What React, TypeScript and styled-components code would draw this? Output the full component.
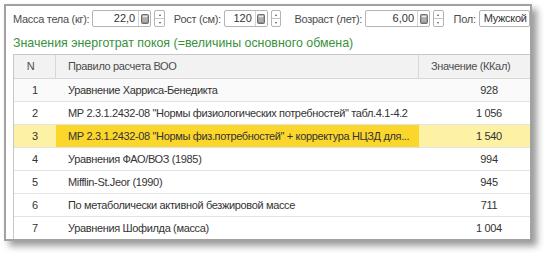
import React from 'react';
import styled, { createGlobalStyle } from 'styled-components';

const GlobalStyle = createGlobalStyle`
  html, body {
    margin: 0;
    padding: 0;
    background: #fff;
  }
  body {
    font-family: "Liberation Sans", Arial, sans-serif;
  }
`;

interface Row {
  n: number;
  rule: string;
  value: string;
  current?: boolean;
}

const rows: Row[] = [
  { n: 1, rule: 'Уравнение Харриса-Бенедикта', value: '928' },
  { n: 2, rule: 'МР 2.3.1.2432-08 "Нормы физиологических потребностей" табл.4.1-4.2', value: '1 056' },
  { n: 3, rule: 'МР 2.3.1.2432-08 "Нормы физ.потребностей" + корректура НЦЗД для...', value: '1 540', current: true },
  { n: 4, rule: 'Уравнения ФАО/ВОЗ (1985)', value: '994' },
  { n: 5, rule: 'Mifflin-St.Jeor (1990)', value: '945' },
  { n: 6, rule: 'По метаболически активной безжировой массе', value: '711' },
  { n: 7, rule: 'Уравнения Шофилда (масса)', value: '1 004' },
];

const CalcIcon = () => (
  <svg width="8" height="10" viewBox="0 0 8 10">
    <rect x="0.5" y="0.5" width="7" height="9" rx="1" fill="#8c8c8c" stroke="#6e6e6e" />
    <rect x="1.5" y="1.5" width="5" height="2" fill="#e8e8e8" />
    <rect x="1.5" y="4.5" width="5" height="1" fill="#d0d0d0" />
    <rect x="1.5" y="6.5" width="5" height="1" fill="#d0d0d0" />
  </svg>
);

const NumberField: React.FC<{ value: string; width: number }> = ({ value, width }) => (
  <>
    <InputBox>
      <InputText $width={width}>{value}</InputText>
      <CalcButton>
        <CalcIcon />
      </CalcButton>
    </InputBox>
    <Spinner>
      <SpinHalf>
        <Arrow $up />
      </SpinHalf>
      <SpinHalf>
        <Arrow />
      </SpinHalf>
    </Spinner>
  </>
);

const App: React.FC = () => {
  return (
    <>
      <GlobalStyle />
      <Page>
        <Frame>
          <FieldsRow>
            <Label>Масса тела (кг):</Label>
            <NumberField value="22,0" width={46} />
            <Label $gap={9}>Рост (см):</Label>
            <NumberField value="120" width={31} />
            <Label $gap={13}>Возраст (лет):</Label>
            <NumberField value="6,00" width={52} />
            <Label $gap={10}>Пол:</Label>
            <SelectBox>Мужской</SelectBox>
          </FieldsRow>

          <GroupTitle>Значения энерготрат покоя (=величины основного обмена)</GroupTitle>

          <Table>
            <HeaderRow>
              <HeadCell $w={42} $center>N</HeadCell>
              <HeadCell $w={363}>Правило расчета ВОО</HeadCell>
              <HeadCell $w={140} $last>Значение (ККал)</HeadCell>
            </HeaderRow>
            {rows.map((r) => (
              <BodyRow key={r.n} $shade={r.n === 1}>
                <Cell $w={42} $center $bg={r.current ? '#fdf1a3' : undefined}>{r.n}</Cell>
                <Cell $w={363} $bg={r.current ? '#fbd72b' : undefined}>{r.rule}</Cell>
                <Cell $w={140} $center $bg={r.current ? '#fdf1a3' : undefined}>{r.value}</Cell>
              </BodyRow>
            ))}
          </Table>
        </Frame>
      </Page>
    </>
  );
};

export default App;

// Styled components
const Page = styled.div`
  width: 547px;
  height: 255px;
  padding: 4px 0 0 4px;
  box-sizing: border-box;
`;

const Frame = styled.div`
  width: 528px;
  height: 237px;
  box-sizing: border-box;
  border: 2px solid #a2a2a2;
  background: #fff;
  box-shadow: 5px 5px 7px rgba(0, 0, 0, 0.4);
  padding: 4px 0 0 7px;
  overflow: hidden;
`;

const FieldsRow = styled.div`
  display: flex;
  align-items: center;
  height: 17px;
  white-space: nowrap;
`;

const Label = styled.span<{ $gap?: number }>`
  font-size: 11px;
  letter-spacing: -0.3px;
  color: #4d4d4d;
  margin-left: ${(p) => p.$gap || 0}px;
  margin-right: 3px;
`;

const InputBox = styled.div`
  display: flex;
  height: 17px;
  box-sizing: border-box;
  border: 1px solid #b4b4b4;
  border-radius: 2px;
  background: #fff;
`;

const InputText = styled.div<{ $width: number }>`
  width: ${(p) => p.$width}px;
  box-sizing: border-box;
  padding-right: 3px;
  text-align: right;
  font-size: 11px;
  line-height: 15px;
  color: #333;
  border-right: 1px solid #d4d4d4;
`;

const CalcButton = styled.div`
  width: 11px;
  display: flex;
  align-items: center;
  justify-content: center;
`;

const Spinner = styled.div`
  display: flex;
  flex-direction: column;
  width: 16px;
  height: 17px;
  box-sizing: border-box;
  margin-left: 3px;
  border: 1px solid #b4b4b4;
  border-radius: 2px;
`;

const SpinHalf = styled.div`
  flex: 1;
  display: flex;
  align-items: center;
  justify-content: center;
  & + & {
    border-top: 1px solid #c4c4c4;
  }
`;

const Arrow = styled.span<{ $up?: boolean }>`
  width: 0;
  height: 0;
  border-left: 1.5px solid transparent;
  border-right: 1.5px solid transparent;
  ${(p) => (p.$up ? 'border-bottom: 2px solid #555;' : 'border-top: 2px solid #555;')}
`;

const SelectBox = styled.div`
  height: 17px;
  width: 80px;
  box-sizing: border-box;
  border: 1px solid #b4b4b4;
  border-radius: 2px;
  padding-left: 4px;
  font-size: 11px;
  letter-spacing: -0.3px;
  line-height: 15px;
  color: #333;
`;

const GroupTitle = styled.div`
  padding: 8px 0 2px;
  line-height: 17px;
  font-size: 12.4px;
  color: #37913d;
  white-space: nowrap;
`;

const Table = styled.div`
  width: 546px;
  border-left: 1px solid #c8c8c8;
  border-top: 1px solid #c8c8c8;
`;

const HeaderRow = styled.div`
  display: flex;
  height: 23px;
  background: #f2f2f2;
  border-bottom: 1px solid #d8d8d8;
`;

const HeadCell = styled.div<{ $w: number; $center?: boolean; $last?: boolean }>`
  width: ${(p) => p.$w}px;
  flex: none;
  box-sizing: border-box;
  padding: ${(p) => (p.$center ? '0 8px 0 0' : '0 0 0 12px')};
  text-align: ${(p) => (p.$center ? 'center' : 'left')};
  border-right: ${(p) => (p.$last ? 'none' : '1px solid #d8d8d8')};
  font-size: 11px;
  letter-spacing: -0.35px;
  line-height: 23px;
  color: #4d4d4d;
  white-space: nowrap;
`;

const BodyRow = styled.div<{ $shade?: boolean }>`
  display: flex;
  height: 22px;
  background: ${(p) => (p.$shade ? '#fafafa' : '#fff')};
  border-bottom: 1px solid #e3e3e3;
`;

const Cell = styled.div<{ $w: number; $center?: boolean; $bg?: string }>`
  width: ${(p) => p.$w}px;
  flex: none;
  box-sizing: border-box;
  padding: ${(p) => (p.$center ? '0' : '0 0 0 12px')};
  text-align: ${(p) => (p.$center ? 'center' : 'left')};
  background: ${(p) => p.$bg || 'transparent'};
  font-size: 11px;
  letter-spacing: -0.35px;
  line-height: 22px;
  color: #333;
  white-space: nowrap;
  overflow: hidden;
`;
